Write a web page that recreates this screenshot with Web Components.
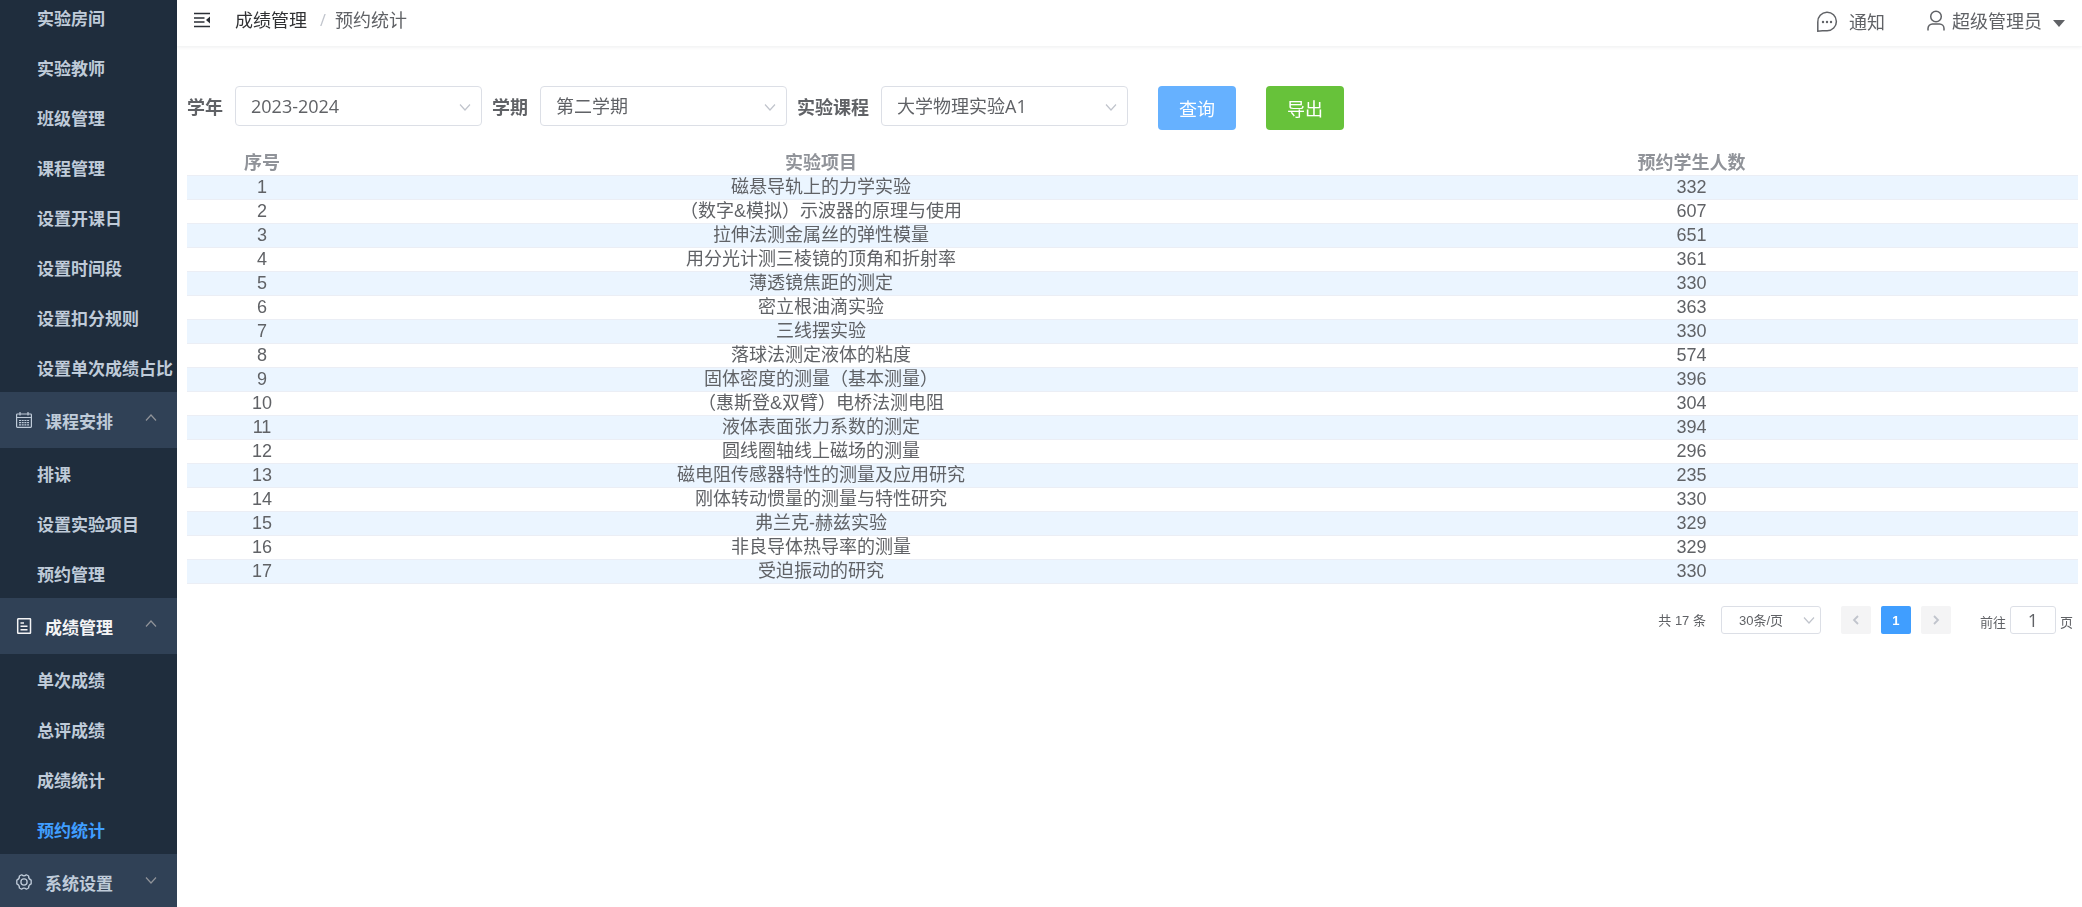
<!DOCTYPE html>
<html lang="zh-CN">
<head>
<meta charset="utf-8">
<meta name="viewport" content="width=device-width, initial-scale=1">
<title>预约统计</title>
<style>
  html, body { margin: 0; height: 100%; }
  body {
    font-family: "Open Sans", "Noto Sans CJK SC", sans-serif;
    font-size: 18px;
    color: #606266;
    background: #fff;
    overflow: hidden;
  }
</style>
</head>
<body>
<lab-app>
  <side-bar slot="side">
    <sub-list>
      <menu-item>实验房间</menu-item>
      <menu-item>实验教师</menu-item>
      <menu-item>班级管理</menu-item>
      <menu-item>课程管理</menu-item>
      <menu-item>设置开课日</menu-item>
      <menu-item>设置时间段</menu-item>
      <menu-item>设置扣分规则</menu-item>
      <menu-item>设置单次成绩占比</menu-item>
    </sub-list>
    <menu-group icon="calendar" label="课程安排" open>
      <menu-item>排课</menu-item>
      <menu-item>设置实验项目</menu-item>
      <menu-item>预约管理</menu-item>
    </menu-group>
    <menu-group icon="document" label="成绩管理" open active>
      <menu-item>单次成绩</menu-item>
      <menu-item>总评成绩</menu-item>
      <menu-item>成绩统计</menu-item>
      <menu-item active>预约统计</menu-item>
    </menu-group>
    <menu-group icon="gear" label="系统设置"></menu-group>
  </side-bar>
  <top-bar slot="top" section="成绩管理" page="预约统计" user="超级管理员"></top-bar>
  <filter-bar>
    <filter-select label="学年" value="2023-2024"></filter-select>
    <filter-select label="学期" value="第二学期"></filter-select>
    <filter-select label="实验课程" value="大学物理实验A1"></filter-select>
    <action-button slot="actions" kind="primary">查询</action-button>
    <action-button slot="actions" kind="success">导出</action-button>
  </filter-bar>
  <stats-table></stats-table>
  <page-nav total="17" size="30条/页" page="1"></page-nav>
</lab-app>

<script>
const ICONS = {
  fold: '<svg viewBox="0 0 18 18" width="18" height="18" fill="none" stroke="#2b2f36"><path d="M1 2.500h16M1 7h10.500M1 11h10.500M1 15.500h16" stroke-width="1.700"/><path d="M17 5.500v7L13 9z" fill="#2b2f36" stroke="none"/></svg>',
  calendar: '<svg viewBox="0 0 16 16" width="16" height="16" fill="none" stroke="currentColor" stroke-width="1.200"><rect x=".6" y="2" width="14.800" height="13.400" rx=".8"/><path d="M.5 5.500h15M4 0v3.500M12 0v3.500"/><path d="M3 8.500h10M3 10.700h10M3 12.900h10" stroke-dasharray="2 .7"/></svg>',
  document: '<svg viewBox="0 0 16 16" width="16" height="16" fill="none" stroke="currentColor" stroke-width="1.500"><rect x="1.700" y=".8" width="12.800" height="14.400" rx=".5"/><path d="M4.500 5h3.500M4.500 8.200h7M4.500 11.800h7"/></svg>',
  gear: '<svg viewBox="0 0 16 16" width="16" height="16" fill="none" stroke="currentColor" stroke-width="1.300" stroke-linejoin="round"><path d="M5.600.8Q8 2.800 10.400.8L12.600 2Q12.300 4.900 15.200 6.100v3.800Q12.300 11.100 12.600 14l-2.200 1.200Q8 13.200 5.600 15.200L3.400 14Q3.700 11.100.8 9.900V6.100Q3.700 4.900 3.400 2z"/><circle cx="8" cy="8" r="3.100"/></svg>',
  down: '<svg viewBox="0 0 12 12" width="12" height="12" fill="none" stroke="currentColor" stroke-width="1.200"><path d="M1 3.500 6 9l5-5.500"/></svg>',
  arrow: '<svg viewBox="0 0 12 12" width="12" height="12" fill="none" stroke="currentColor" stroke-width="1.800"><path d="M2 4l4 4 4-4"/></svg>',
  chat: '<svg viewBox="0 0 22 22" width="22" height="22" fill="none" stroke="#606266" stroke-width="1.500"><path d="M1.800 20.200V11A9.300 9.300 0 1 1 11 19.800H6.500z"/><g fill="#606266" stroke="none"><circle cx="7" cy="11" r="1.200"/><circle cx="11" cy="11" r="1.200"/><circle cx="15" cy="11" r="1.200"/></g></svg>',
  user: '<svg viewBox="0 0 18 22" width="18" height="22" fill="none" stroke="#606266" stroke-width="1.500"><circle cx="9" cy="6.500" r="5.300"/><path d="M1 20.500v-2a4.500 4.500 0 0 1 4.500-4.500h7a4.500 4.500 0 0 1 4.500 4.500v2"/></svg>',
  caret: '<svg viewBox="0 0 12 7" width="12" height="7"><path d="M0 0h12L6 7z" fill="#606266"/></svg>'
};

class Base extends HTMLElement {
  connectedCallback() {
    if (this.shadowRoot) return;
    this.attachShadow({ mode: "open" }).innerHTML =
      "<style>:host,*{box-sizing:border-box}svg{display:block;flex:none}" + this.css() + "</style>" + this.html();
  }
  a(name) { return this.getAttribute(name) || ""; }
}

customElements.define("lab-app", class extends Base {
  css() { return `
    :host { display: grid; grid-template-columns: 177px 1fr; height: 100vh; }
    .side { min-height: 0; overflow: hidden; background: #304156; }
    .content { min-width: 0; display: flex; flex-direction: column; }
    main { padding: 40px 4px 0 10px; }`; }
  html() { return `
    <div class="side"><slot name="side"></slot></div>
    <div class="content"><slot name="top"></slot><main><slot></slot></main></div>`; }
});

customElements.define("side-bar", class extends Base {
  css() { return `
    :host { display: block; height: 100%; }
    nav { height: 100%; overflow-y: auto; scrollbar-width: none; font-size: 17px; font-weight: 700; color: #bfcbd9; }`; }
  html() { return `<nav aria-label="主菜单"><slot></slot></nav>`; }
});

customElements.define("sub-list", class extends Base {
  css() { return `:host { display: block; background: #1f2d3d; }`; }
  html() { return `<slot></slot>`; }
});

customElements.define("menu-item", class extends Base {
  css() { return `
    :host { display: block; }
    a { display: flex; align-items: center; height: 50px; padding-left: 37px; color: inherit; text-decoration: none; white-space: nowrap; }
    :host([active]) a { color: #409eff; }`; }
  html() { return `<a href="#"><slot></slot></a>`; }
});

customElements.define("menu-group", class extends Base {
  css() { return `
    :host { display: block; }
    button { display: flex; align-items: center; width: 100%; height: 56px; padding: 0 20px 0 16px; border: 0; background: #304156; color: inherit; font: inherit; }
    span { flex: 1; padding-left: 13px; text-align: left; }
    :host([active]) button { color: #f4f4f5; }
    .arrow { color: #909399; margin-bottom: 4px; }
    :host([open]) .arrow { transform: rotate(180deg); }
    .sub { background: #1f2d3d; }`; }
  html() { return `
    <button type="button" aria-expanded="${this.hasAttribute("open")}">${ICONS[this.a("icon")]}<span>${this.a("label")}</span><i class="arrow">${ICONS.down}</i></button>
    <div class="sub"><slot></slot></div>`; }
});

customElements.define("top-bar", class extends Base {
  css() { return `
    :host { display: flex; align-items: center; height: 46px; padding: 0 17px 6px 16px; box-shadow: 0 1px 4px rgba(0,21,41,.08); line-height: 24px; }
    button { display: flex; align-items: center; padding: 0; border: 0; background: none; font: inherit; color: inherit; }
    nav { flex: 1; display: flex; margin-left: 24px; }
    nav a { color: #303133; text-decoration: none; }
    nav i { width: 28px; padding-left: 4px; text-align: center; font-size: 16px; font-style: normal; color: #c0c4cc; }
    .notice { gap: 11px; margin-right: 42px; padding-top: 4px; }
    .user { gap: 7px; padding-top: 2px; }
    .user svg:last-child { margin: 4px 0 0 4px; }`; }
  html() { return `
    <button type="button" aria-label="收起菜单">${ICONS.fold}</button>
    <nav aria-label="面包屑"><a href="#">${this.a("section")}</a><i>/</i><span>${this.a("page")}</span></nav>
    <button type="button" class="notice">${ICONS.chat}<span>通知</span></button>
    <button type="button" class="user">${ICONS.user}<span>${this.a("user")}</span>${ICONS.caret}</button>`; }
});

customElements.define("filter-bar", class extends Base {
  css() { return `
    :host { display: flex; align-items: flex-start; gap: 10px; }
    .actions { display: flex; gap: 30px; margin-left: 20px; }`; }
  html() { return `<slot></slot><div class="actions"><slot name="actions"></slot></div>`; }
});

customElements.define("filter-select", class extends Base {
  css() { return `
    :host { display: flex; align-items: center; gap: 12px; height: 40px; }
    label { font-weight: 700; white-space: nowrap; }
    .box { display: grid; align-items: center; width: 247px; }
    .box > * { grid-area: 1 / 1; }
    select { appearance: none; width: 100%; height: 40px; padding: 0 30px 0 15px; border: 1px solid #dcdfe6; border-radius: 4px; background: #fff; font: inherit; color: inherit; }
    i { justify-self: end; margin: 2px 11px 0 0; color: #c0c4cc; pointer-events: none; }`; }
  html() { return `
    <label for="s">${this.a("label")}</label>
    <div class="box"><select id="s"><option>${this.a("value")}</option></select><i>${ICONS.down}</i></div>`; }
});

customElements.define("action-button", class extends Base {
  css() { return `
    :host { display: block; }
    button { height: 44px; padding: 0 21px; border: 0; border-radius: 4px; background: #66b1ff; color: #fff; font: inherit; }
    :host([kind=success]) button { background: #67c23a; }`; }
  html() { return `<button type="button"><slot></slot></button>`; }
});

const ROWS = [
  ["磁悬导轨上的力学实验", 332], ["（数字&amp;模拟）示波器的原理与使用", 607], ["拉伸法测金属丝的弹性模量", 651],
  ["用分光计测三棱镜的顶角和折射率", 361], ["薄透镜焦距的测定", 330], ["密立根油滴实验", 363],
  ["三线摆实验", 330], ["落球法测定液体的粘度", 574], ["固体密度的测量（基本测量）", 396],
  ["（惠斯登&amp;双臂）电桥法测电阻", 304], ["液体表面张力系数的测定", 394], ["圆线圈轴线上磁场的测量", 296],
  ["磁电阻传感器特性的测量及应用研究", 235], ["刚体转动惯量的测量与特性研究", 330], ["弗兰克-赫兹实验", 329],
  ["非良导体热导率的测量", 329], ["受迫振动的研究", 330]
];

customElements.define("stats-table", class extends Base {
  css() { return `
    :host { display: block; margin-top: 22px; font-family: "Liberation Sans", "Noto Sans CJK SC", sans-serif; }
    table { width: 100%; table-layout: fixed; border-collapse: separate; border-spacing: 0; text-align: center; }
    th, td { height: 24px; padding: 0; border-bottom: 1px solid #ebeef5; line-height: 23px; white-space: nowrap; overflow: hidden; }
    th { color: #909399; }
    tbody tr:nth-child(odd) { background: #ebf5ff; }
    .no { width: 150px; }
    .name { width: 51.2%; }`; }
  html() { return `
    <table><colgroup><col class="no"><col class="name"><col></colgroup>
    <thead><tr><th scope="col">序号</th><th scope="col">实验项目</th><th scope="col">预约学生人数</th></tr></thead>
    <tbody>${ROWS.map((r, i) => `<tr><td>${i + 1}</td><td>${r[0]}</td><td>${r[1]}</td></tr>`).join("")}</tbody></table>`; }
});

customElements.define("page-nav", class extends Base {
  css() { return `
    :host { display: flex; justify-content: flex-end; align-items: center; margin-top: 22px; padding-right: 5px; height: 28px; font-family: "Liberation Sans", "Noto Sans CJK SC", sans-serif; font-size: 13px; }
    .total { padding-bottom: 2px; }
    .box { display: grid; align-items: center; width: 100px; margin: 0 20px 0 15px; }
    .box > * { grid-area: 1 / 1; }
    .box i { justify-self: end; margin-right: 6px; color: #c0c4cc; pointer-events: none; }
    select, input { height: 28px; border: 1px solid #dcdfe6; border-radius: 3px; background: #fff; color: inherit; font: inherit; }
    select { appearance: none; width: 100%; padding: 0 0 0 17px; }
    .pages { display: flex; gap: 10px; margin-right: 29px; }
    button { display: grid; place-items: center; width: 30px; height: 28px; padding: 0; border: 0; border-radius: 2px; background: #f4f4f5; color: #c0c4cc; font: inherit; font-weight: 700; }
    button.on { background: #409eff; color: #fff; }
    .prev svg { transform: rotate(90deg); } .next svg { transform: rotate(-90deg); }
    .jump { display: flex; align-items: center; gap: 4px; }
    .jump span { padding-top: 2px; }
    input { width: 46px; padding: 0; text-align: center; font-family: "Open Sans", sans-serif; font-size: 18px; }`; }
  html() { return `
    <span class="total">共 ${this.a("total")} 条</span>
    <div class="box"><select aria-label="每页条数"><option>${this.a("size")}</option></select><i>${ICONS.down}</i></div>
    <div class="pages"><button type="button" class="prev" aria-label="上一页">${ICONS.arrow}</button><button type="button" class="on">${this.a("page")}</button><button type="button" class="next" aria-label="下一页">${ICONS.arrow}</button></div>
    <label class="jump"><span>前往</span><input type="text" value="${this.a("page")}"><span>页</span></label>`; }
});

document.querySelector("side-bar").shadowRoot.querySelector("nav").scrollTop = 8;
</script>
</body>
</html>
